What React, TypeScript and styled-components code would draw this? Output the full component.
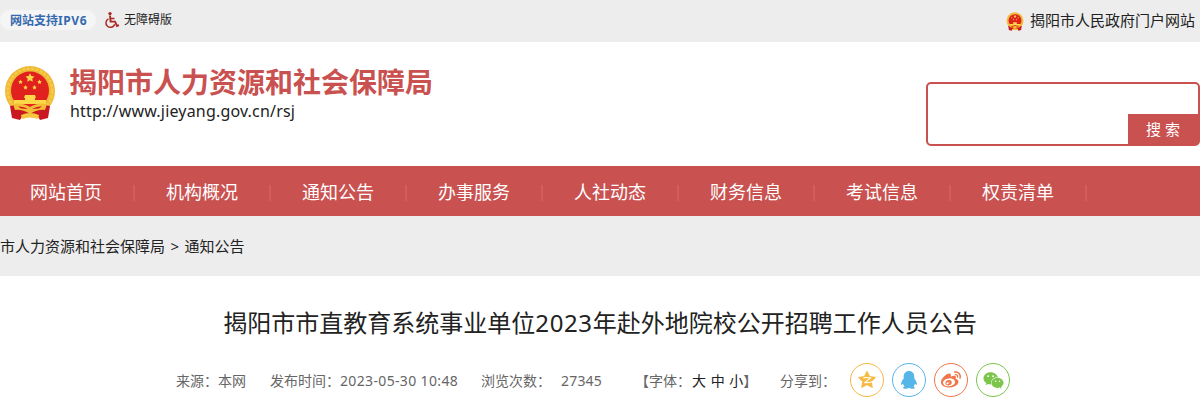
import React from "react";
import styled, { createGlobalStyle } from "styled-components";
import { FaWeibo, FaWeixin } from "react-icons/fa";

const COLOURS = {
  RED: "#c95150",
  GREY: "#ededed",
  TEXT: "#222",
  MUTED: "#666",
};

const GlobalStyle = createGlobalStyle`
  * { box-sizing: border-box; }
  body {
    margin: 0;
    overflow: hidden;
    background: #fff;
    color: ${COLOURS.TEXT};
    font-family: "Noto Sans", "Noto Sans CJK SC", sans-serif;
  }
`;

const Page = styled.div`
  width: 1200px;
  height: 400px;
  overflow: hidden;
  white-space: nowrap;
`;

const TopBar = styled.div`
  display: flex;
  align-items: center;
  height: 42px;
  padding: 0 5px 2px 0;
  background: ${COLOURS.GREY};
`;

const Ipv6Badge = styled.span`
  height: 20px;
  width: 96px;
  margin-right: 8px;
  padding-left: 10px;
  border-radius: 10px;
  background: #f5f5f5;
  color: #3569ae;
  font-size: 12px;
  font-weight: 700;
  line-height: 21px;
`;

const Accessible = styled.a`
  display: flex;
  align-items: center;
  gap: 4px;
  font-size: 12px;
  line-height: 20px;
`;

const PortalLink = styled.a`
  display: flex;
  align-items: center;
  gap: 6px;
  margin-left: auto;
  font-size: 15px;
  line-height: 20px;
  svg {
    margin-top: 2px;
  }
`;

const Header = styled.header`
  display: flex;
  justify-content: space-between;
  height: 124px;
  padding-left: 4px;
`;

const Brand = styled.div`
  display: flex;
  gap: 13px;
  padding-top: 23px;
`;

const SiteName = styled.h1`
  margin: 0;
  color: ${COLOURS.RED};
  font-size: 28px;
  font-weight: 700;
  line-height: 35px;
`;

const SiteUrl = styled.div`
  padding-left: 1px;
  font-size: 16px;
  line-height: 22px;
  letter-spacing: 0.18px;
`;

const SearchBox = styled.form`
  display: flex;
  align-items: flex-end;
  justify-content: flex-end;
  width: 274px;
  height: 64px;
  margin-top: 40px;
  border: 2px solid ${COLOURS.RED};
  border-radius: 5px;
`;

const SearchButton = styled.button`
  width: 70px;
  height: 30px;
  padding: 0;
  border: 0;
  background: ${COLOURS.RED};
  color: #fff;
  font-family: inherit;
  font-size: 15px;
  line-height: 30px;
`;

const Nav = styled.nav`
  display: flex;
  height: 50px;
  background: ${COLOURS.RED};
`;

const NavItem = styled.a`
  display: flex;
  align-items: center;
  justify-content: space-between;
  width: 136px;
  padding: 0 1px 0 30px;
  color: #fff;
  font-size: 18px;
  &::after {
    content: "";
    width: 2px;
    height: 16px;
    margin-top: 3px;
    background: #d75a5d;
  }
`;

const Breadcrumb = styled.div`
  height: 60px;
  background: ${COLOURS.GREY};
  font-size: 15px;
  line-height: 61px;
  word-spacing: 1.5px;
`;

const Title = styled.h2`
  margin: 0;
  padding-top: 27px;
  font-size: 24px;
  font-weight: 400;
  line-height: 40px;
  text-align: center;
`;

const Meta = styled.div`
  display: flex;
  align-items: center;
  height: 34px;
  margin-top: 20px;
  padding-left: 176px;
  color: ${COLOURS.MUTED};
  font-size: 14px;
`;

const MetaItem = styled.span<{ $width: number }>`
  flex: none;
  width: ${(props) => props.$width}px;
`;

const Digits = styled.span<{ $spacing?: number }>`
  letter-spacing: ${(props) => props.$spacing || 0.2}px;
`;

const FontSize = styled.a`
  margin-left: 1px;
  color: ${COLOURS.TEXT};
`;

const ShareList = styled.div`
  display: flex;
  gap: 8px;
`;

const ShareButton = styled.a<{ $colour: string }>`
  display: flex;
  align-items: center;
  justify-content: center;
  width: 34px;
  height: 34px;
  border: 1px solid ${(props) => props.$colour};
  border-radius: 50%;
  color: ${(props) => props.$colour};
`;

const STAR = "0,-10 2.9,-4 9.5,-3.1 4.8,1.5 5.9,8.1 0,5 -5.9,8.1 -4.8,1.5 -9.5,-3.1 -2.9,-4";

const Emblem: React.FC<{ width: number; height: number }> = ({ width, height }) => (
  <svg width={width} height={height} viewBox="0 0 52 56">
    <circle cx="26" cy="26" r="25" fill="#efb836" />
    <circle cx="26" cy="26" r="22.3" fill="none" stroke="#f5cc48" strokeWidth="2.4" strokeDasharray="3 1.4" />
    <circle cx="26" cy="25.5" r="19" fill="#e0211d" />
    <g fill="#fbd849">
      <polygon points={STAR} transform="translate(26 13) scale(.47)" />
      <polygon points={STAR} transform="translate(16.5 17) scale(.24)" />
      <polygon points={STAR} transform="translate(35.5 17) scale(.24)" />
      <polygon points={STAR} transform="translate(21.5 22.5) scale(.24)" />
      <polygon points={STAR} transform="translate(30.5 22.5) scale(.24)" />
      <path d="M21 30h10l1 3h-1v2h11v4H10v-4h11v-2h-1z" />
    </g>
    <path d="M6 41 Q16 38 26 43 Q36 38 46 41 L44 53 L36 55 L33 50 L26 52 L19 50 L16 55 L8 53Z" fill="#c91822" />
    <path d="M9 39 Q18 37 26 42 Q34 37 43 39 L41 45 Q34 44 26 49 Q18 44 11 45Z" fill="#f3bd36" />
    <path d="M14 41.5 Q20 41 24 44 L17 43.5Z M38 41.5 Q32 41 28 44 L35 43.5Z" fill="#d51e20" />
    <path d="M17 50 Q26 46 35 50 L34 54 Q26 51 18 54Z" fill="#f6c63d" />
  </svg>
);

const WheelchairIcon = () => (
  <svg width="16" height="18" viewBox="0 0 16 18" fill="none" stroke="#ab2a24" strokeWidth="1.5">
    <circle cx="6" cy="2.6" r="1.7" fill="#ab2a24" stroke="none" />
    <path d="M6 4.5 L6.6 10.6 H11 L13 15 L15 14.2" strokeWidth="1.9" />
    <path d="M6.4 7.5 H10.5" />
    <path d="M4.4 7.8 A4.5 4.5 0 1 0 10.7 13.2" />
  </svg>
);

const QzoneIcon = () => (
  <svg width="20" height="20" viewBox="-10 -10.2 20 20">
    <polygon points={STAR} fill="currentColor" stroke="currentColor" strokeWidth="1" strokeLinejoin="round" transform="scale(.9)" />
    <path d="M-3.6 -2.3 Q0 -3.1 3.5 -2.2 L-2.2 2.4 Q1 3 5 1.6" fill="none" stroke="#fff" strokeWidth="1.1" />
  </svg>
);

const QqIcon = () => (
  <svg width="18" height="20" viewBox="0 0 18 20" fill="currentColor">
    <path d="M9 1C5.6 1 3.7 3.6 3.7 6.6V8.6C2.4 10.3 1 12.5 1.1 14.3C1.2 15.4 2 15.1 3 13.8C3.3 14.9 3.8 15.7 4.6 16.4C3.3 16.9 3 17.5 3.2 18.1C3.5 19.1 7.4 19 9 17.7C10.6 19 14.5 19.1 14.8 18.1C15 17.5 14.7 16.9 13.4 16.4C14.2 15.7 14.7 14.9 15 13.8C16 15.1 16.8 15.4 16.9 14.3C17 12.5 15.6 10.3 14.3 8.6V6.6C14.3 3.6 12.4 1 9 1Z" />
  </svg>
);

const NAV_ITEMS = [
  "网站首页",
  "机构概况",
  "通知公告",
  "办事服务",
  "人社动态",
  "财务信息",
  "考试信息",
  "权责清单",
];

const App: React.FC = () => (
  <Page lang="zh-CN">
    <GlobalStyle />
    <TopBar>
      <Ipv6Badge>
        网站支持<Digits $spacing={0.6}>IPV6</Digits>
      </Ipv6Badge>
      <Accessible>
        <WheelchairIcon />
        无障碍版
      </Accessible>
      <PortalLink>
        <Emblem width={18} height={19} />
        揭阳市人民政府门户网站
      </PortalLink>
    </TopBar>
    <Header>
      <Brand>
        <Emblem width={52} height={56} />
        <div>
          <SiteName>揭阳市人力资源和社会保障局</SiteName>
          <SiteUrl>http://www.jieyang.gov.cn/rsj</SiteUrl>
        </div>
      </Brand>
      <SearchBox>
        <SearchButton type="button">搜 索</SearchButton>
      </SearchBox>
    </Header>
    <Nav>
      {NAV_ITEMS.map((item) => (
        <NavItem key={item}>{item}</NavItem>
      ))}
    </Nav>
    <Breadcrumb>市人力资源和社会保障局 &gt; 通知公告</Breadcrumb>
    <Title>
      揭阳市市直教育系统事业单位<Digits $spacing={0.6}>2023</Digits>年赴外地院校公开招聘工作人员公告
    </Title>
    <Meta>
      <MetaItem $width={94}>来源：本网</MetaItem>
      <MetaItem $width={211}>
        发布时间：<Digits $spacing={0.35}>2023-05-30 10:48</Digits>
      </MetaItem>
      <MetaItem $width={80}>浏览次数：</MetaItem>
      <MetaItem $width={74}>
        <Digits>27345</Digits>
      </MetaItem>
      <MetaItem $width={145}>
        【字体：<FontSize>大</FontSize> <FontSize>中</FontSize> <FontSize>小</FontSize>】
      </MetaItem>
      <MetaItem $width={70}>分享到：</MetaItem>
      <ShareList>
        <ShareButton $colour="#f5b944">
          <QzoneIcon />
        </ShareButton>
        <ShareButton $colour="#56b6e7">
          <QqIcon />
        </ShareButton>
        <ShareButton $colour="#f0764a">
          <FaWeibo size={20} />
        </ShareButton>
        <ShareButton $colour="#7bc549">
          <FaWeixin size={21} />
        </ShareButton>
      </ShareList>
    </Meta>
  </Page>
);

export default App;
